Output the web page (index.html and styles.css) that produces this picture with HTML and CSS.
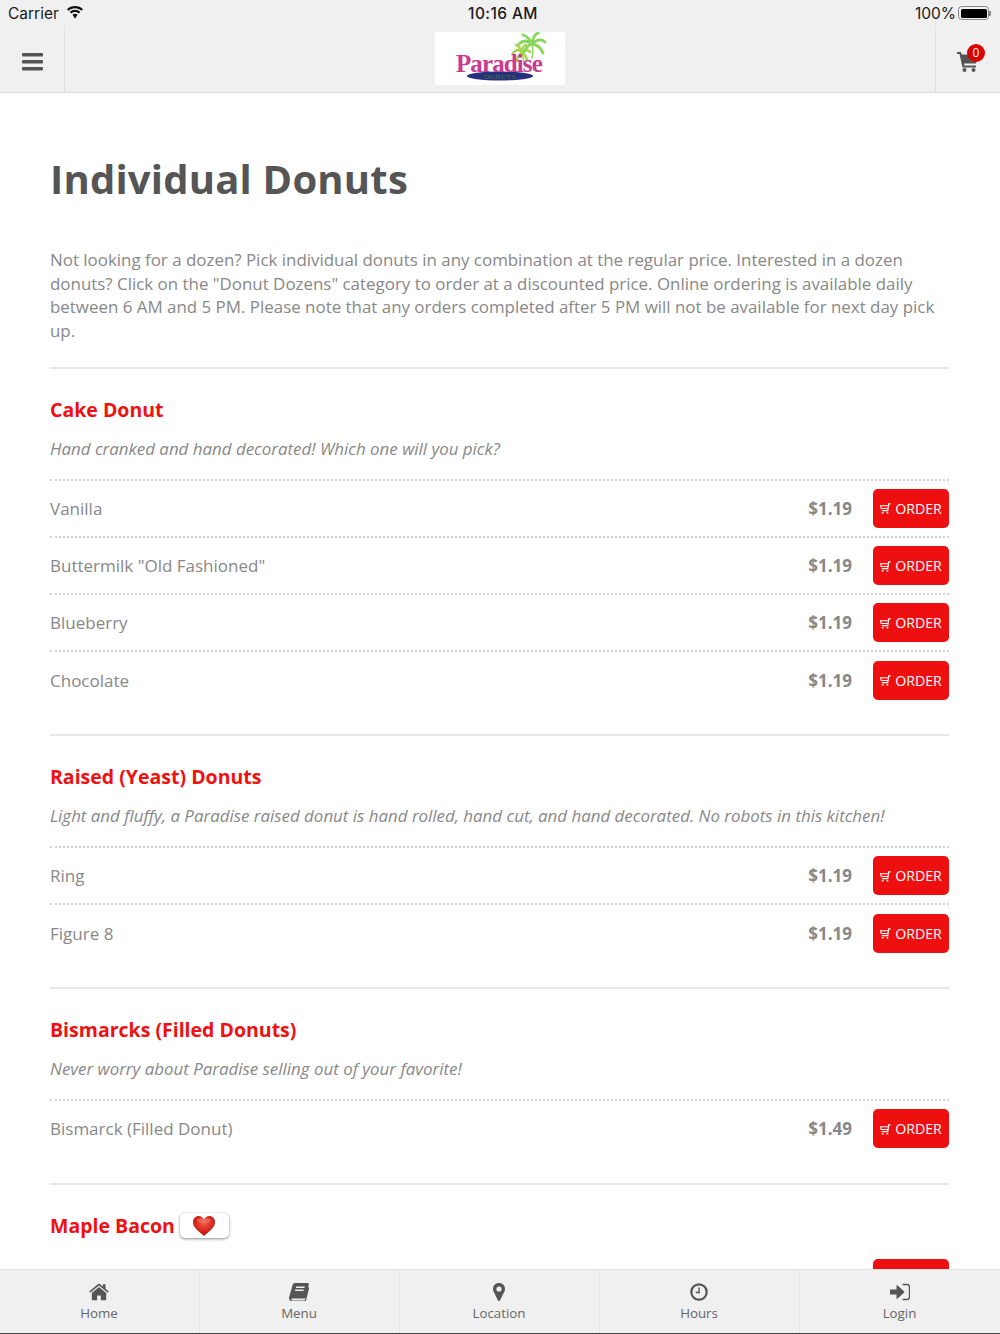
FILE: index.html
```html
<!DOCTYPE html>
<html lang="en">
<head>
  <meta charset="UTF-8" />
  <meta name="viewport" content="width=device-width, initial-scale=1"/>
  <title>Individual Donuts</title>
  <link rel="stylesheet" href="styles.css">
</head>
<body>
  <svg class="defs" width="0" height="0">
    <defs>
      <symbol id="mini-cart" viewBox="0 0 12 12">
        <path d="M11.600 1H9.500L8.500 8.300H2" fill="none" stroke="#fff" stroke-width="1.200"/>
        <path d="M9.200 3H.6L1.300 6H8.800" fill="none" stroke="#fff" stroke-width="1.200"/>
        <path d="M2 9.800h1.800v1.700H2zM7.200 9.800H9v1.700H7.200z" fill="#fff"/>
      </symbol>
    </defs>
  </svg>
  <div class="app">
    <header class="top">
      <div class="status">
        <div class="status-left">
          <span>Carrier</span>
          <svg class="wifi" viewBox="0 0 18 13" width="18" height="13">
            <path d="M9 2.200c2.500 0 4.800 1 6.500 2.600L17 3.200C14.900 1.200 12.100 0 9 0S3.100 1.200 1 3.200l1.500 1.600C4.200 3.200 6.500 2.200 9 2.200z" fill="#111"/>
            <path d="M9 6c1.500 0 2.800.6 3.800 1.500l1.500-1.600C12.900 4.600 11 3.800 9 3.800S5.100 4.600 3.700 5.900l1.500 1.600C6.200 6.600 7.500 6 9 6z" fill="#111"/>
            <path d="M9 7.700c-1 0-1.800.4-2.500 1L9 12.700l2.500-4C10.800 8.100 10 7.700 9 7.700z" fill="#111"/>
          </svg>
        </div>
        <div class="status-time">10:16 AM</div>
        <div class="status-right">
          <span>100%</span>
          <span class="battery"><span class="battery-fill"></span></span>
        </div>
      </div>
      <nav class="navbar">
        <div class="nav-side nav-left">
          <svg viewBox="0 0 21 18" width="21" height="18">
            <rect y="0" width="21" height="3.600" rx="1" fill="#555"/>
            <rect y="7" width="21" height="3.600" rx="1" fill="#555"/>
            <rect y="14" width="21" height="3.600" rx="1" fill="#555"/>
          </svg>
        </div>
        <div class="nav-logo">
          <div class="logo">
            <svg viewBox="0 0 130 52" width="130" height="52">
              <g class="palm-back">
                <path class="trunk" d="M89 32C89 28 88 25 87 21"/>
                <path d="M87 21Q83 15 78 21M87 21Q85 14 81 13M87 21Q87 14 91 13M87 21Q92 16 95 20M87 21Q83 23 82 29M87 21Q91 23 92 28"/>
              </g>
              <g class="palm-front">
                <path class="trunk" d="M97 26C98 21 98 16 97 12"/>
                <path d="M97 12Q90 6 84 12M97 12Q93 4 88 3M97 12Q98 3 103 1M97 12Q104 5 110 10M97 12Q105 13 108 21M97 12Q92 13 90 19"/>
              </g>
              <ellipse cx="65" cy="44" rx="33" ry="4.500" fill="#27307e"/>
              <text class="logo-name" x="21" y="40">Paradise</text>
              <text class="logo-sub" x="65" y="46.800" text-anchor="middle">DONUTS</text>
            </svg>
          </div>
        </div>
        <div class="nav-side nav-right">
          <svg viewBox="0 0 22 20" width="22" height="20">
            <path d="M0 0h4l.8 2.500H21l-2 9H7l.4 2H19v2H5.500L2.500 2H0z" fill="#555"/>
            <circle cx="7.500" cy="18" r="2" fill="#555"/>
            <circle cx="16.500" cy="18" r="2" fill="#555"/>
          </svg>
          <span class="cart-badge">0</span>
        </div>
      </nav>
    </header>

    <main class="content">
      <h1>Individual Donuts</h1>
      <p class="intro">Not looking for a dozen? Pick individual donuts in any combination at the regular price. Interested in a dozen donuts? Click on the "Donut Dozens" category to order at a discounted price. Online ordering is available daily between 6 AM and 5 PM. Please note that any orders completed after 5 PM will not be available for next day pick up.</p>

      <section class="category">
        <h2>Cake Donut</h2>
        <p class="category-desc">Hand cranked and hand decorated! Which one will you pick?</p>
        <div class="item"><span class="item-name">Vanilla</span><span class="item-price">$1.19</span><a class="order-btn"><svg width="11" height="11"><use href="#mini-cart"/></svg>ORDER</a></div>
        <div class="item"><span class="item-name">Buttermilk "Old Fashioned"</span><span class="item-price">$1.19</span><a class="order-btn"><svg width="11" height="11"><use href="#mini-cart"/></svg>ORDER</a></div>
        <div class="item"><span class="item-name">Blueberry</span><span class="item-price">$1.19</span><a class="order-btn"><svg width="11" height="11"><use href="#mini-cart"/></svg>ORDER</a></div>
        <div class="item"><span class="item-name">Chocolate</span><span class="item-price">$1.19</span><a class="order-btn"><svg width="11" height="11"><use href="#mini-cart"/></svg>ORDER</a></div>
      </section>

      <section class="category">
        <h2>Raised (Yeast) Donuts</h2>
        <p class="category-desc">Light and fluffy, a Paradise raised donut is hand rolled, hand cut, and hand decorated. No robots in this kitchen!</p>
        <div class="item"><span class="item-name">Ring</span><span class="item-price">$1.19</span><a class="order-btn"><svg width="11" height="11"><use href="#mini-cart"/></svg>ORDER</a></div>
        <div class="item"><span class="item-name">Figure 8</span><span class="item-price">$1.19</span><a class="order-btn"><svg width="11" height="11"><use href="#mini-cart"/></svg>ORDER</a></div>
      </section>

      <section class="category">
        <h2>Bismarcks (Filled Donuts)</h2>
        <p class="category-desc">Never worry about Paradise selling out of your favorite!</p>
        <div class="item"><span class="item-name">Bismarck (Filled Donut)</span><span class="item-price">$1.49</span><a class="order-btn"><svg width="11" height="11"><use href="#mini-cart"/></svg>ORDER</a></div>
      </section>

      <section class="category">
        <h2 class="with-tag">Maple Bacon
          <span class="heart-tag">
            <svg viewBox="0 0 24 22" width="24" height="22">
              <defs>
                <radialGradient id="heart-fill" cx="50%" cy="35%" r="65%">
                  <stop offset="0" stop-color="#f0604a"/>
                  <stop offset="0.6" stop-color="#d9281c"/>
                  <stop offset="1" stop-color="#a8150f"/>
                </radialGradient>
              </defs>
              <path d="M12 21C7 16.500 1 12.500 1 7c0-3.500 2.600-6 5.700-6C9 1 11 2.300 12 4.200 13 2.300 15 1 17.300 1 20.400 1 23 3.500 23 7c0 5.500-6 9.500-11 14z" fill="url(#heart-fill)"/>
              <ellipse cx="12" cy="5.500" rx="7" ry="2.500" fill="#fff" opacity="0.18"/>
            </svg>
          </span>
        </h2>
        <div class="item item-clipped"><a class="order-btn order-btn-end"></a></div>
      </section>
    </main>

    <footer class="tabs">
      <a class="tab">
        <svg viewBox="0 0 20 17" width="20" height="17"><path d="M10 3.500 2.800 9.500V16c0 .5.300.8.800.8h4.600v-4.800h3.600v4.800h4.600c.5 0 .8-.3.800-.8V9.500z" fill="#555"/><path d="M19.800 8 16.500 5.200V.8h-2.600v2.300L10.900.6a1.400 1.400 0 0 0-1.800 0L.2 8l1 1.200L10 2l8.800 7.200z" fill="#555"/></svg>
        <span>Home</span>
      </a>
      <a class="tab">
        <svg viewBox="0 0 20 18" width="20" height="18"><path d="M6 0h12.500c1 0 1.500.8 1.300 1.700l-2.800 12c-.3 1-1.100 1.800-2.200 1.800H3.500c-.8 0-1.300.6-1.100 1.200.1.400.5.700 1 .7h11.800c.4 0 .7-.2.900-.6l3-12.800.7.400c.3.400.3.900.2 1.300l-2.900 11.500c-.3 1-1.100 1.700-2.100 1.700H2.800C1.300 18 .1 16.800 0 15.300c0-.4 0-.8.100-1.100L3.600 2C4 .8 4.900 0 6 0z" fill="#555"/><path d="M7.300 3.500h8.500l-.4 1.600H6.900zM6.300 6.500h8.500l-.4 1.600H5.900z" fill="#f0f0f0"/></svg>
        <span>Menu</span>
      </a>
      <a class="tab">
        <svg viewBox="0 0 14 18" width="14" height="18"><path fill-rule="evenodd" d="M7 0c3.500 0 6 2.600 6 5.900 0 1-.2 1.800-.6 2.700L8.100 17.200c-.5 1-1.800 1-2.300 0L1.600 8.600C1.200 7.700 1 6.900 1 5.900 1 2.600 3.500 0 7 0zm0 3.400a2.600 2.600 0 1 0 0 5.200 2.600 2.600 0 0 0 0-5.200z" fill="#555"/></svg>
        <span>Location</span>
      </a>
      <a class="tab">
        <svg viewBox="0 0 18 18" width="18" height="18"><circle cx="9" cy="9" r="7.700" fill="none" stroke="#555" stroke-width="2.200"/><path d="M9.800 4.500v5.700H5.800V8.800h2.600V4.500z" fill="#555"/></svg>
        <span>Hours</span>
      </a>
      <a class="tab">
        <svg viewBox="0 0 20 17" width="20" height="17"><path d="M0 6h6.500V2.200c0-.5.500-.7.900-.4l6.800 6.200c.3.300.3.700 0 1l-6.800 6.200c-.4.300-.9.100-.9-.4V11H0z" fill="#555"/><path d="M12.500 1H17c1.500 0 2.500 1 2.500 2.500v10c0 1.500-1 2.500-2.500 2.500h-4.500" fill="none" stroke="#555" stroke-width="1.400"/></svg>
        <span>Login</span>
      </a>
    </footer>
  </div>
</body>
</html>
```

FILE: styles.css
```css
/* reset */
*, *::before, *::after { box-sizing: border-box; margin: 0; padding: 0; }
html, body { height: 100%; }
body { font-family: 'Open Sans', sans-serif; background: #fff; color: #888; }
.defs { display: block; }
.app { height: 1334px; display: flex; flex-direction: column; overflow: hidden; }

/* status bar + nav */
.top { background: #f0f0f0; border-bottom: 1px solid #ddd; height: 93px; flex: none; }
.status { height: 26px; display: grid; grid-template-columns: 1fr auto 1fr; align-items: center; padding: 0 11px 0 8px; font-family: Inter, sans-serif; font-size: 15.500px; color: #1a1a1a; }
.status-left { display: flex; align-items: center; gap: 7px; }
.wifi { margin-top: -2px; }
.status-time { font-weight: 500; margin-left: 9px; letter-spacing: 0.4px; }
.status-right { display: flex; align-items: center; justify-content: flex-end; gap: 2px; }
.battery { width: 31px; height: 14px; border: 1px solid #888; border-radius: 3.500px; padding: 1.500px; position: relative; }
.battery::after { content: ""; position: absolute; right: -3px; top: 3.500px; width: 2px; height: 5px; background: #888; border-radius: 0 1px 1px 0; }
.battery-fill { display: block; height: 100%; background: #000; border-radius: 1.500px; }

.navbar { height: 66px; display: flex; }
.nav-side { width: 65px; display: flex; align-items: center; justify-content: center; flex: none; position: relative; }
.nav-left { border-right: 1px solid #e0e0e0; padding-top: 5px; }
.nav-right { border-left: 1px solid #e0e0e0; padding-top: 6px; }
.nav-logo { flex: 1; display: flex; justify-content: center; padding-top: 6px; }
.logo { width: 130px; height: 53px; background: #fff; }
.logo-name { font-family: 'Liberation Serif', serif; font-size: 25px; font-weight: 700; fill: #c93a90; letter-spacing: -0.9px; }
.logo-sub { font-family: 'Liberation Serif', serif; font-size: 7px; fill: #4a7a30; letter-spacing: 0.6px; }
.palm-back path, .palm-front path { fill: none; stroke-linecap: round; }
.palm-back path { stroke: #a8d64f; stroke-width: 2.600; }
.palm-front path { stroke: #86d65a; stroke-width: 2.800; }
.palm-back .trunk, .palm-front .trunk { stroke-width: 1.400; }
.cart-badge { position: absolute; top: 18px; left: 31px; width: 18px; height: 18px; border-radius: 50%; background: #d90000; color: #fff; font-size: 12px; line-height: 18px; text-align: center; }

/* main column */
.content { flex: 1; min-height: 0; overflow: hidden; padding: 0 51px 0 50px; }
h1 { font-size: 40px; line-height: 54px; font-weight: 700; color: #555; margin-top: 59px; letter-spacing: 0.2px; }
.intro { font-size: 16.920px; line-height: 23.600px; margin-top: 42px; }

.category { border-top: 2px solid #e8e8e8; margin-top: 26.600px; }
.intro + .category { margin-top: 24.500px; }
h2 { font-size: 19.500px; line-height: 28px; font-weight: 700; color: #f01010; margin-top: 27px; }
.category-desc { font-size: 16.900px; line-height: 24px; font-style: italic; margin-top: 13px; margin-bottom: 18px; }

.item { display: flex; align-items: center; border-top: 2px dotted #d2d2d2; padding: 8px 0; height: 57.200px; }
.item-name { flex: 1; font-size: 17px; }
.item-price { font-size: 17px; font-weight: 700; margin-right: 21px; }
.order-btn { width: 76px; height: 39px; background: #ee1010; color: #fff; border-radius: 5px; display: flex; align-items: center; justify-content: center; gap: 4px; font-size: 14.200px; }
.order-btn svg { margin-top: 1px; }
.order-btn-end { margin-left: auto; }

.with-tag { display: flex; align-items: center; gap: 5px; margin-bottom: 9px; }
.heart-tag { width: 49px; height: 25px; background: #fff; border-radius: 5px; box-shadow: 0 1px 3px rgba(0,0,0,0.45); display: flex; align-items: center; justify-content: center; }
.item-clipped { border-top-color: transparent; }

/* bottom tabs */
.tabs { height: 65px; flex: none; display: grid; grid-template-columns: repeat(5, 1fr); background: #f0f0f0; border-top: 1px solid #e2e2e2; border-bottom: 1px solid #444; }
.tab { display: flex; flex-direction: column; align-items: center; justify-content: flex-start; padding: 13px 1px 0 0; border-right: 1px solid #e4e4e4; font-size: 13.300px; color: #666; }
.tab:last-child { border-right: none; }
.tab svg { height: 18px; }
.tab span { margin-top: 3px; line-height: 18px; }
```
